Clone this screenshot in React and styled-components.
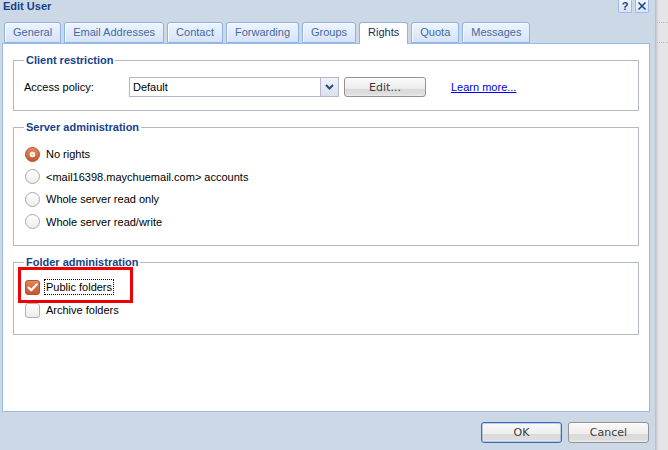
import styled, { createGlobalStyle } from "styled-components";

const GlobalStyle = createGlobalStyle`
  html, body {
    margin: 0;
    padding: 0;
  }
  body {
    font-family: "Liberation Sans", Arial, sans-serif;
    font-size: 11px;
    color: #000;
    background: #e5e5e5;
  }
`;

const Page = styled.div`
  display: flex;
  width: 668px;
  height: 450px;
  overflow: hidden;
`;

const Window = styled.div`
  flex: none;
  width: 655px;
  box-sizing: border-box;
  padding: 0 5px 0 2px;
  background: #cdd8e6;
  display: flex;
  flex-direction: column;
`;

const Backdrop = styled.div`
  flex: 1;
  padding-top: 22px;
  background: linear-gradient(to right, #b4bac3 0, #d3d5d8 2px, #e5e5e5 4px);
`;

const GridLine = styled.div`
  height: 19px;
  border-top: 1px dotted #bcbcbc;
  border-bottom: 1px dotted #bcbcbc;
`;

const Header = styled.div`
  height: 22px;
  display: flex;
  justify-content: space-between;
  align-items: flex-start;
`;

const Title = styled.div`
  padding-left: 1px;
  font-weight: bold;
  line-height: 13px;
  color: #15428b;
`;

const Tools = styled.div`
  display: flex;
  gap: 3px;
  margin-right: 1px;
`;

const ToolButton = styled.div`
  width: 14px;
  height: 13px;
  box-sizing: border-box;
  border: 1px solid #99bbe8;
  border-top: none;
  border-radius: 0 0 2px 2px;
  background: linear-gradient(#f2f6fc, #d9e5f5);
  display: flex;
  align-items: center;
  justify-content: center;
  color: #15428b;
  font-weight: bold;
  font-size: 11px;
  line-height: 1;
`;

const TabStrip = styled.div`
  display: flex;
  gap: 3px;
  padding-left: 2px;
  height: 21px;
  position: relative;
  z-index: 1;
`;

const Tab = styled.div`
  height: ${({ $active }) => ($active ? "22px" : "21px")};
  box-sizing: border-box;
  padding: 0 8px;
  border: 1px solid #8db2e3;
  border-bottom: ${({ $active }) => ($active ? "none" : "1px solid #8db2e3")};
  border-radius: 3px 3px 0 0;
  background: ${({ $active }) =>
    $active ? "#fff" : "linear-gradient(#eef4fd, #d6e3f6)"};
  box-shadow: inset 1px 1px 0 rgba(255, 255, 255, 0.8);
  color: ${({ $active }) => ($active ? "#15305e" : "#416aa3")};
  line-height: 19px;
  white-space: nowrap;
`;

const Panel = styled.div`
  height: 369px;
  box-sizing: border-box;
  border: 1px solid #99bbe8;
  background: #fff;
  padding: 10px 10px 0;
  display: flex;
  flex-direction: column;
  gap: 10px;
`;

const Group = styled.fieldset`
  margin: 0;
  min-width: 0;
  border: 1px solid #b5b8c8;
  padding: ${({ $pad }) => $pad};
`;

const Legend = styled.legend`
  padding: 0 2px;
  font-weight: bold;
  line-height: 13px;
  color: #15428b;
`;

const PolicyRow = styled.div`
  display: flex;
  align-items: center;
  height: 20px;
`;

const FieldLabel = styled.div`
  width: 105px;
`;

const Select = styled.div`
  width: 210px;
  height: 20px;
  box-sizing: border-box;
  border: 1px solid #b5b8c8;
  display: flex;
  align-items: stretch;
`;

const SelectValue = styled.div`
  flex: 1;
  padding-left: 3px;
  display: flex;
  align-items: center;
`;

const SelectArrow = styled.div`
  width: 17px;
  border-left: 1px solid #b5b8c8;
  background: linear-gradient(#f1f4f9, #d9e1ec);
  display: flex;
  align-items: center;
  justify-content: center;
`;

const Button = styled.div`
  width: ${({ $width }) => $width || "81px"};
  height: ${({ $height }) => $height || "21px"};
  margin-left: ${({ $ml }) => $ml || "0"};
  box-sizing: border-box;
  border: 1px solid ${({ $primary }) => ($primary ? "#3a6cb5" : "#929292")};
  box-shadow: ${({ $primary }) =>
    $primary ? "inset 0 0 0 1px rgba(110, 160, 225, 0.45)" : "inset 0 1px 0 #fff"};
  border-radius: 3px;
  background: linear-gradient(
    #f9f9f9 0,
    #eeeeee 58%,
    #dadada 60%,
    #dddddd 88%,
    #ececec 100%
  );
  display: flex;
  align-items: center;
  justify-content: center;
  font-family: "DejaVu Sans", Verdana, sans-serif;
  font-size: 11px;
  color: #3c3c3c;
`;

const Link = styled.a`
  margin-left: 25px;
  color: #0000ee;
  text-decoration: underline;
`;

const OptionList = styled.div`
  display: flex;
  flex-direction: column;
  gap: ${({ $gap }) => $gap || "0"};
`;

const OptionRow = styled.div`
  position: relative;
  display: flex;
  align-items: center;
  gap: 6px;
  height: ${({ $height }) => $height || "22px"};
  padding-left: 1px;
`;

const OptionLabel = styled.span`
  line-height: 14px;
  padding: 0 1px;
  margin-left: -1px;
  outline: ${({ $focused }) => ($focused ? "1px dotted #000" : "none")};
`;

const Highlight = styled.div`
  position: absolute;
  left: -6px;
  top: -8.5px;
  width: 115px;
  height: 36px;
  box-sizing: border-box;
  border: 3px solid #f00000;
  pointer-events: none;
`;

const Footer = styled.div`
  display: flex;
  justify-content: flex-end;
  gap: 6px;
  margin-top: 10px;
  padding-right: 1px;
`;

const Radio = ({ checked }) => (
  <svg width="15" height="15" viewBox="0 0 15 15">
    <defs>
      <linearGradient id="rOn" x1="0" y1="0" x2="0" y2="1">
        <stop offset="0" stopColor="#e98a5c" />
        <stop offset="1" stopColor="#c2552a" />
      </linearGradient>
      <linearGradient id="rOff" x1="0" y1="0" x2="0" y2="1">
        <stop offset="0" stopColor="#ffffff" />
        <stop offset="1" stopColor="#ececec" />
      </linearGradient>
    </defs>
    {checked ? (
      <>
        <circle cx="7.5" cy="7.5" r="7" fill="url(#rOn)" stroke="#b4542a" />
        <circle cx="7.5" cy="7.5" r="2.8" fill="#fff" />
        <circle cx="7.5" cy="7.5" r="1.2" fill="#f4c2a8" />
      </>
    ) : (
      <circle cx="7.5" cy="7.5" r="7" fill="url(#rOff)" stroke="#a9a9a9" />
    )}
  </svg>
);

const Checkbox = ({ checked }) => (
  <svg width="15" height="15" viewBox="0 0 15 15">
    <defs>
      <linearGradient id="cOn" x1="0" y1="0" x2="0" y2="1">
        <stop offset="0" stopColor="#e7875a" />
        <stop offset="1" stopColor="#c1532a" />
      </linearGradient>
      <linearGradient id="cOff" x1="0" y1="0" x2="0" y2="1">
        <stop offset="0" stopColor="#ffffff" />
        <stop offset="1" stopColor="#ebebeb" />
      </linearGradient>
    </defs>
    {checked ? (
      <>
        <rect x="0.5" y="0.5" width="14" height="14" rx="2.5" fill="url(#cOn)" stroke="#b4542a" />
        <path d="M3.6 7.6 L6.3 10.3 L11.6 4.4" fill="none" stroke="#fff" strokeWidth="2.2" strokeLinecap="round" strokeLinejoin="round" />
      </>
    ) : (
      <rect x="0.5" y="0.5" width="14" height="14" rx="2.5" fill="url(#cOff)" stroke="#b3b3b3" />
    )}
  </svg>
);

const tabs = ["General", "Email Addresses", "Contact", "Forwarding", "Groups", "Rights", "Quota", "Messages"];

const serverOptions = [
  "No rights",
  "<mail16398.maychuemail.com> accounts",
  "Whole server read only",
  "Whole server read/write",
];

export default function App() {
  return (
    <Page>
      <GlobalStyle />
      <Window>
        <Header>
          <Title>Edit User</Title>
          <Tools>
            <ToolButton>?</ToolButton>
            <ToolButton>
              <svg width="10" height="10" viewBox="0 0 10 10">
                <path d="M1.5 1.5 L8.5 8.5 M8.5 1.5 L1.5 8.5" stroke="#15428b" strokeWidth="1.5" />
              </svg>
            </ToolButton>
          </Tools>
        </Header>

        <TabStrip>
          {tabs.map((t) => (
            <Tab key={t} $active={t === "Rights"}>
              {t}
            </Tab>
          ))}
        </TabStrip>

        <Panel>
          <Group $pad="10px 10px 13px">
            <Legend>Client restriction</Legend>
            <PolicyRow>
              <FieldLabel>Access policy:</FieldLabel>
              <Select>
                <SelectValue>Default</SelectValue>
                <SelectArrow>
                  <svg width="9" height="6" viewBox="0 0 9 6">
                    <path d="M1 1 L4.5 4.5 L8 1" fill="none" stroke="#2b4a80" strokeWidth="2" />
                  </svg>
                </SelectArrow>
              </Select>
              <Button $width="82px" $height="20px" $ml="5px">Edit...</Button>
              <Link>Learn more...</Link>
            </PolicyRow>
          </Group>

          <Group $pad="9px 10px 12px">
            <Legend>Server administration</Legend>
            <OptionList $gap="0.5px">
              {serverOptions.map((o, i) => (
                <OptionRow key={o}>
                  <Radio checked={i === 0} />
                  <OptionLabel>{o}</OptionLabel>
                </OptionRow>
              ))}
            </OptionList>
          </Group>

          <Group $pad="7px 10px 12px">
            <Legend>Folder administration</Legend>
            <OptionList>
              <OptionRow $height="23px">
                <Checkbox checked />
                <OptionLabel $focused>Public folders</OptionLabel>
                <Highlight />
              </OptionRow>
              <OptionRow $height="23px">
                <Checkbox />
                <OptionLabel>Archive folders</OptionLabel>
              </OptionRow>
            </OptionList>
          </Group>
        </Panel>

        <Footer>
          <Button $primary>OK</Button>
          <Button>Cancel</Button>
        </Footer>
      </Window>
      <Backdrop>
        <GridLine />
      </Backdrop>
    </Page>
  );
}
